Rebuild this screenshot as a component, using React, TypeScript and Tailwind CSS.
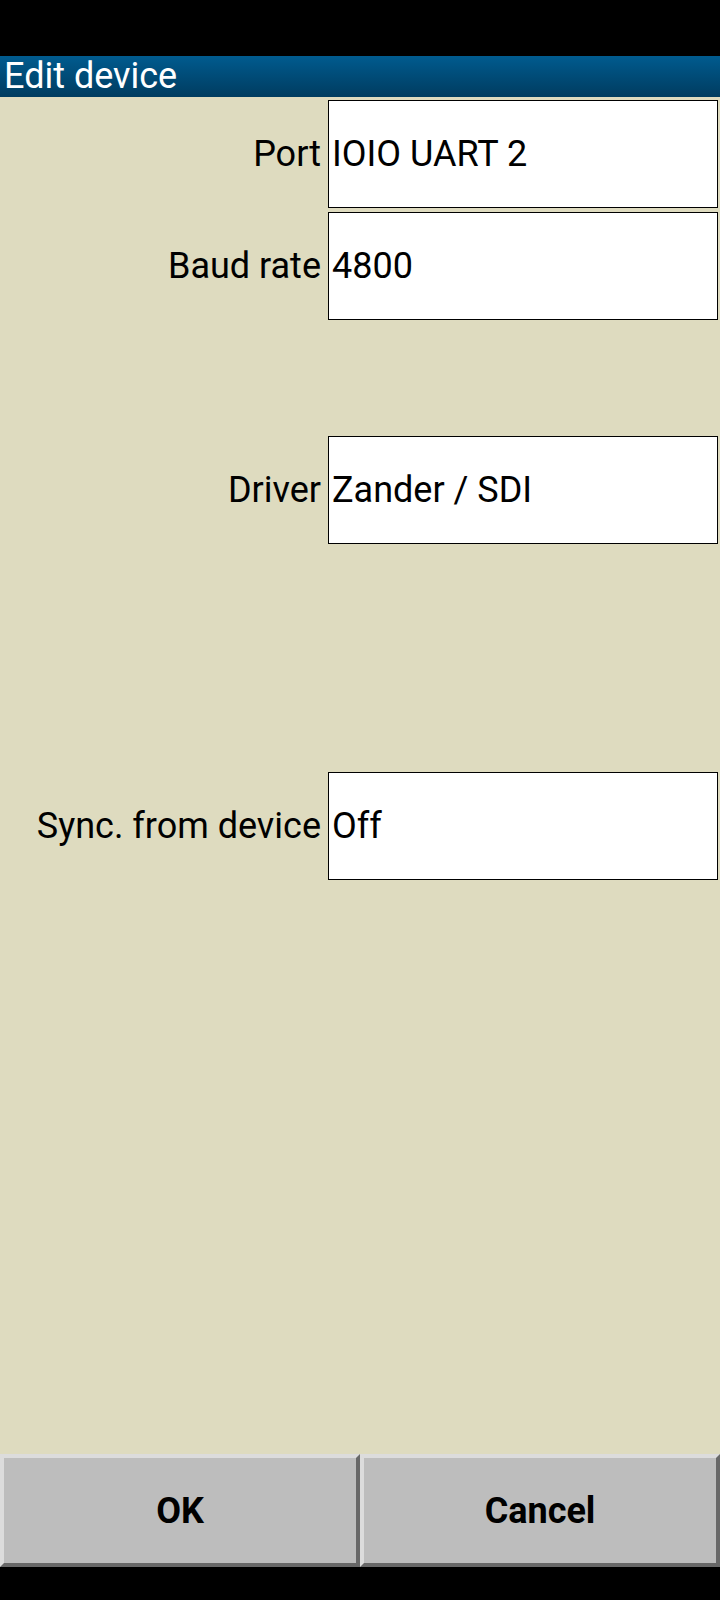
const rows: ({ label: string; value: string } | null)[] = [
  { label: 'Port', value: 'IOIO UART 2' },
  { label: 'Baud rate', value: '4800' },
  null,
  { label: 'Driver', value: 'Zander / SDI' },
  null,
  null,
  { label: 'Sync. from device', value: 'Off' },
];

function FieldRow({ label, value }: { label: string; value: string }) {
  return (
    <div className="flex h-[112px] items-center">
      <div className="w-[328px] pr-[7px] text-right text-[36px] text-black">{label}</div>
      <div className="flex h-[108px] w-[390px] items-center border border-black bg-white pl-[3px] text-[36px] text-black">
        {value}
      </div>
    </div>
  );
}

function BevelButton({ children }: { children: string }) {
  return (
    <button className="flex items-center justify-center border-4 border-t-[#dcdcdc] border-l-[#dcdcdc] border-b-[#686868] border-r-[#686868] bg-[#bdbdbd] text-[36px] font-bold text-black">
      {children}
    </button>
  );
}

export default function App() {
  return (
    <div
      className="flex h-[1600px] w-[720px] flex-col bg-black"
      style={{ fontFamily: 'Roboto, "Noto Sans", sans-serif' }}
    >
      <div className="h-[56px]" />
      <div className="h-[41px] bg-gradient-to-b from-[#005b8f] to-[#003c60] pl-[4px] text-[36px] leading-[41px] text-white">
        Edit device
      </div>
      <div className="flex-1 bg-[#dedbbf] pt-px">
        {rows.map((row, i) =>
          row ? <FieldRow key={i} label={row.label} value={row.value} /> : <div key={i} className="h-[112px]" />
        )}
      </div>
      <div className="grid h-[113px] grid-cols-2 bg-[#dedbbf]">
        <BevelButton>OK</BevelButton>
        <BevelButton>Cancel</BevelButton>
      </div>
      <div className="h-[33px]" />
    </div>
  );
}
